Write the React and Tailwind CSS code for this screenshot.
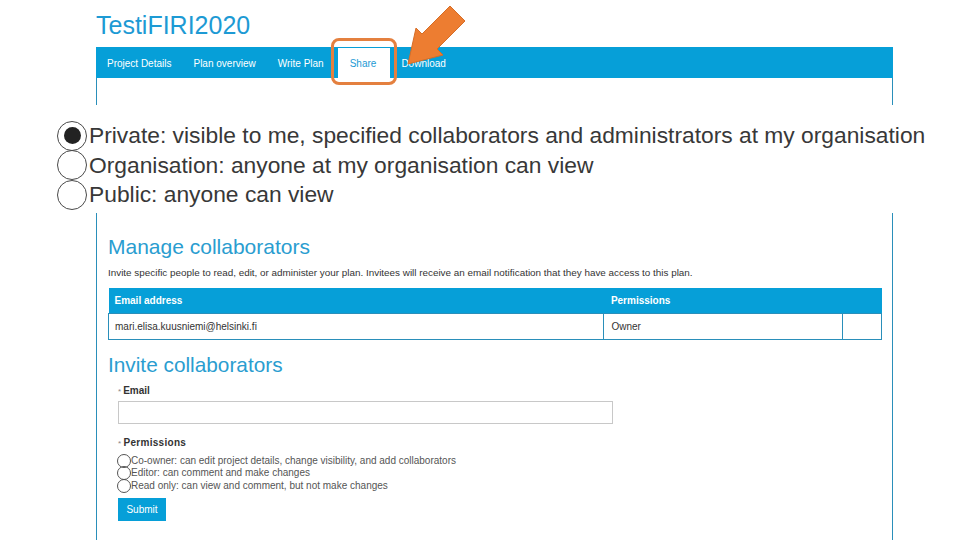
import React from 'react';

const tabs = ['Project Details', 'Plan overview', 'Write Plan', 'Share', 'Download'];

const visibility = [
    { label: 'Private: visible to me, specified collaborators and administrators at my organisation', checked: true },
    { label: 'Organisation: anyone at my organisation can view', checked: false },
    { label: 'Public: anyone can view', checked: false },
];

const permissions = [
    'Co-owner: can edit project details, change visibility, and add collaborators',
    'Editor: can comment and make changes',
    'Read only: can view and comment, but not make changes',
];

const App = () => {
    return (
        <div className="relative w-[960px] h-[540px] overflow-hidden bg-white flex flex-col font-['Liberation_Sans',Arial,sans-serif]">
            {/* Title */}
            <div className="h-[47px] pl-[96px] pt-[13px]">
                <h1 className="text-[25px] leading-[25px] text-[#1d9ad4]">TestiFIRI2020</h1>
            </div>

            {/* Tabs */}
            <nav className="ml-[96px] w-[797px] h-[31px] bg-[#069fd8] flex items-end">
                {tabs.map((tab) => (
                    <div
                        key={tab}
                        className={
                            tab === 'Share'
                                ? 'h-[30px] ml-[3px] pl-[12px] pr-[14px] flex items-center text-[10px] bg-white text-[#1d9ad4]'
                                : 'h-[30px] px-[11px] flex items-center text-[10px] text-white'
                        }
                    >
                        {tab}
                    </div>
                ))}
            </nav>

            {/* Panel top */}
            <div className="ml-[96px] w-[797px] h-[27px] border-l border-r border-[#2a8fba]"></div>

            {/* Visibility options (pasted larger) */}
            <div className="h-[108px] pl-[57px] pt-[16px]">
                {visibility.map((opt) => (
                    <div key={opt.label} className="h-[29.5px] flex items-center">
                        <div className="w-[30px] h-[30px] rounded-full border border-[#4a4a4a] flex items-center justify-center shrink-0">
                            {opt.checked && <div className="w-[17px] h-[17px] rounded-full bg-[#222]"></div>}
                        </div>
                        <span className="ml-[2px] text-[22.8px] leading-none text-[#383838] whitespace-nowrap">{opt.label}</span>
                    </div>
                ))}
            </div>

            {/* Panel body */}
            <div className="ml-[96px] w-[797px] flex-1 border-l border-r border-[#2a8fba] pl-[11px] pr-[10px]">
                <h2 className="mt-[22px] text-[21px] leading-[24px] text-[#2a9dd0]">Manage collaborators</h2>
                <p className="mt-[8px] text-[9.9px] leading-[12px] text-[#333]">
                    Invite specific people to read, edit, or administer your plan. Invitees will receive an email notification that they have access to this plan.
                </p>

                <table className="mt-[9px] w-[774px] border-collapse text-[10px]">
                    <thead>
                        <tr className="h-[25px] bg-[#069fd8] text-white font-bold">
                            <th className="text-left pl-[6px] w-[496px]">Email address</th>
                            <th className="text-left pl-[7px]" colSpan={2}>Permissions</th>
                        </tr>
                    </thead>
                    <tbody>
                        <tr className="h-[26px] text-[#333]">
                            <td className="border border-[#2a8fba] pl-[6px]">mari.elisa.kuusniemi@helsinki.fi</td>
                            <td className="border border-[#2a8fba] pl-[7px] w-[239px]">Owner</td>
                            <td className="border border-[#2a8fba] w-[39px]"></td>
                        </tr>
                    </tbody>
                </table>

                <h2 className="mt-[13px] text-[20.8px] leading-[24px] text-[#2a9dd0]">Invite collaborators</h2>

                <div className="pl-[10px]">
                    <label className="block mt-[8px] text-[10px] leading-[12px] font-bold text-[#333]">
                        <span className="text-[#888] font-normal text-[8px] mr-[2px]">*</span>Email
                    </label>
                    <input type="text" className="block mt-[3px] w-[495px] h-[23px] border border-[#c8c8c8] outline-none" />

                    <label className="block mt-[13px] text-[10px] leading-[12px] font-bold text-[#333] tracking-[0.3px]">
                        <span className="text-[#888] font-normal text-[8px] mr-[2px]">*</span>Permissions
                    </label>
                    <div className="mt-[5px]">
                        {permissions.map((p) => (
                            <div key={p} className="h-[12.5px] flex items-center">
                                <div className="w-[14px] h-[14px] rounded-full border border-[#555] shrink-0 -ml-[1px]"></div>
                                <span className="text-[10px] leading-none text-[#555] whitespace-nowrap">{p}</span>
                            </div>
                        ))}
                    </div>
                    <button className="mt-[6px] w-[48px] h-[23px] bg-[#069fd8] text-white text-[10px]">Submit</button>
                </div>
            </div>

            {/* Orange highlight around the Share tab */}
            <div className="absolute left-[331px] top-[38px] w-[66px] h-[47px] rounded-[8px] border-[3px] border-[#e4803f]"></div>

            {/* Orange arrow */}
            <svg className="absolute left-0 top-0" width="960" height="100" viewBox="0 0 960 100">
                <polygon
                    points="408,64 443,55 437,49 465,21 450,6 422,34 416,28"
                    fill="#ed7d31"
                    stroke="#d66d27"
                    strokeWidth="1"
                    strokeLinejoin="round"
                />
            </svg>
        </div>
    );
};

export default App;
